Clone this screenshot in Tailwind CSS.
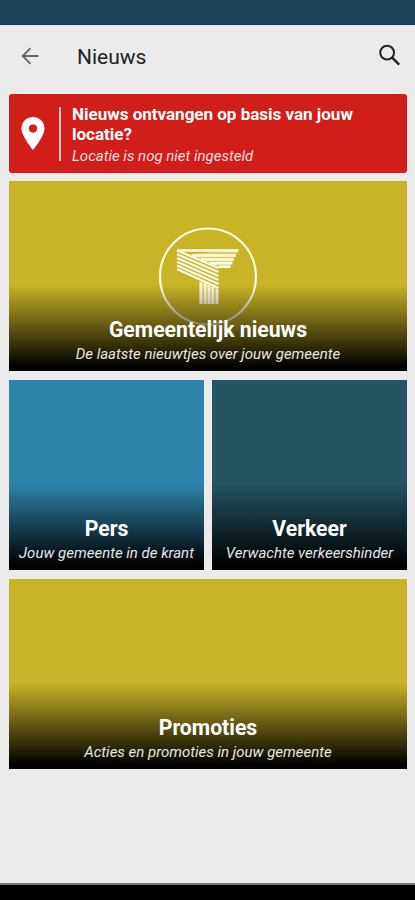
<!doctype html>
<html lang="nl">
<head>
<meta charset="UTF-8" />
<meta name="viewport" content="width=device-width, initial-scale=1.0" />
<title>Nieuws</title>
<script src="https://cdn.jsdelivr.net/npm/@tailwindcss/browser@4"></script>
</head>
<body class="flex flex-col h-screen overflow-hidden bg-[#ebebeb] font-['Roboto',sans-serif]">

<!-- STATUS BAR -->
<div class="h-[25px] shrink-0 bg-[#1c4558] border-b border-[#163a4c]"></div>

<!-- HEADER -->
<header class="flex items-center h-[69px] shrink-0 pl-[21px] pr-[14px] pb-[7px]">
    <a href="#" aria-label="Terug">
        <svg class="w-[18px] h-[18px]" viewBox="0 0 18 18" fill="none" stroke="#666" stroke-width="1.9">
            <path d="M17.5 9H2M9.5 1.2L1.7 9l7.8 7.8" />
        </svg>
    </a>
    <h1 class="ml-[38px] mt-[2px] text-[21px] leading-none text-[#222]">Nieuws</h1>
    <button class="ml-auto mb-[2px]" aria-label="Zoeken">
        <svg class="w-[22px] h-[22px]" viewBox="0 0 23 23" fill="none" stroke="#222">
            <circle cx="8.5" cy="9" r="7.2" stroke-width="2.1" />
            <path d="M13.5 14l7.6 7.6" stroke-width="2.5" />
        </svg>
    </button>
</header>

<main class="flex flex-col pl-[9px] pr-[8px] text-white">

    <!-- LOCATION -->
    <div class="flex items-center h-[79px] mb-2 pl-3 rounded-[3px] bg-[#d11e19]">
        <svg class="w-6 h-[33px]" viewBox="0 0 24 33" fill="#fff" fill-rule="evenodd">
            <path d="M12 0C5.4 0 .5 5 .5 11.5C.5 19.5 12 33 12 33S23.5 19.5 23.5 11.5C23.5 5 18.6 0 12 0zM12 7.500a4.100 4.100 0 1 1 0 8.200a4.100 4.100 0 0 1 0-8.200z" />
        </svg>
        <div class="w-[2px] h-[54px] ml-[14px] bg-[#f7c5c0]"></div>
        <div class="ml-[11px] mt-[3px] whitespace-nowrap">
            <p class="text-[17px] leading-[20px] font-bold">Nieuws ontvangen op basis van jouw<br />locatie?</p>
            <p class="mt-[2px] text-[15px] leading-[20px] italic text-[#fbdedb]">Locatie is nog niet ingesteld</p>
        </div>
    </div>

    <!-- NEWS -->
    <a href="#" class="relative flex flex-col items-center justify-end h-[190px] mb-[9px] pb-[7px] bg-[#c9b326] whitespace-nowrap">
        <svg class="absolute left-[149px] top-[46px] w-[100px] h-[100px]" viewBox="0 0 100 100" fill="none" stroke="#fffbe6">
            <circle cx="50" cy="49.5" r="48" stroke-width="2.2" />
            <path d="M30 27L80 23L71.500 41H61z" fill="#fffbe6" fill-opacity="0.35" stroke="none" />
            <path d="M19 23.500H80.500M34 28.500H78M43 32.500H76M52 36.200H74.500M61 39.800H72.500" stroke-width="2.4" />
            <path d="M19 23.500L60.500 41M19 27.200L60.500 45M19 31L60.500 49M19 34.700L60.500 53M19 38.400L60.500 57M19 42L60.500 61" stroke-width="2.2" />
            <path d="M41 54L60.500 62V77H41z" fill="#fffbe6" fill-opacity="0.3" stroke="none" />
            <path d="M43 55V77M47.200 56V77M51 58V77M54.800 60V77M59 62V77" stroke-width="2.7" />
        </svg>
        <div class="absolute inset-x-0 bottom-0 h-[86px] bg-linear-to-t from-black from-5% to-transparent"></div>
        <h2 class="relative text-[21.2px] leading-[24px] font-bold">Gemeentelijk nieuws</h2>
        <p class="relative mt-[2px] text-[15px] leading-[20px] italic text-[#e6e6e6]">De laatste nieuwtjes over jouw gemeente</p>
    </a>

    <!-- PRESS / TRAFFIC -->
    <div class="grid grid-cols-2 gap-2 mb-[9px] whitespace-nowrap">
        <a href="#" class="relative flex flex-col items-center justify-end h-[190px] pb-[7px] bg-[#2d83a9]">
            <div class="absolute inset-x-0 bottom-0 h-[86px] bg-linear-to-t from-black from-5% to-transparent"></div>
            <h2 class="relative text-[21.2px] leading-[24px] font-bold">Pers</h2>
            <p class="relative mt-[2px] text-[15px] leading-[20px] italic text-[#e6e6e6]">Jouw gemeente in de krant</p>
        </a>
        <a href="#" class="relative flex flex-col items-center justify-end h-[190px] pb-[7px] bg-[#245362]">
            <div class="absolute inset-x-0 bottom-0 h-[86px] bg-linear-to-t from-black from-5% to-transparent"></div>
            <h2 class="relative text-[21.2px] leading-[24px] font-bold">Verkeer</h2>
            <p class="relative mt-[2px] text-[15px] leading-[20px] italic text-[#e6e6e6]">Verwachte verkeershinder</p>
        </a>
    </div>

    <!-- PROMOTIONS -->
    <a href="#" class="relative flex flex-col items-center justify-end h-[190px] pb-[7px] bg-[#c9b326] whitespace-nowrap">
        <div class="absolute inset-x-0 bottom-0 h-[86px] bg-linear-to-t from-black from-5% to-transparent"></div>
        <h2 class="relative text-[21.2px] leading-[24px] font-bold">Promoties</h2>
        <p class="relative mt-[2px] text-[15px] leading-[20px] italic text-[#e6e6e6]">Acties en promoties in jouw gemeente</p>
    </a>
</main>

<!-- NAVIGATION BAR -->
<div class="h-[17px] shrink-0 mt-auto bg-black border-t-2 border-[#777]"></div>

</body>
</html>
